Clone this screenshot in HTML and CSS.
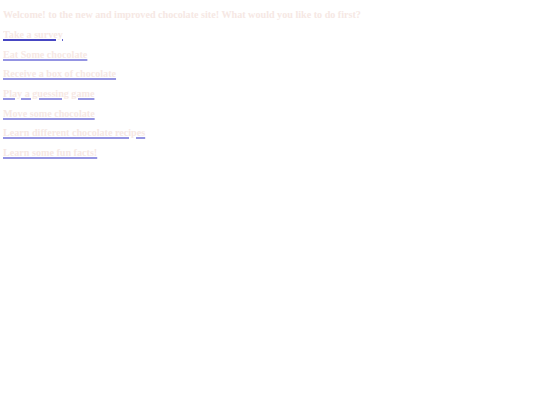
FILE: index.html
```html
<!DOCTYPE html>
<html>
<head>
<meta charset="utf-8">
<link rel="stylesheet" href="styles.css">
</head>
<body>
<h2 class="title">Welcome! to the new and improved chocolate site! What would you like to do first?</h2>
<h2 class="item"><a class="link link-first" href="#"><span class="txt">Take a survey</span></a></h2>
<h2 class="item"><a class="link" href="#"><span class="txt">Eat Some chocolate</span></a></h2>
<h2 class="item"><a class="link" href="#"><span class="txt">Receive a box of chocolate</span></a></h2>
<h2 class="item"><a class="link" href="#"><span class="txt">Play a guessing game</span></a></h2>
<h2 class="item"><a class="link" href="#"><span class="txt">Move some chocolate</span></a></h2>
<h2 class="item"><a class="link" href="#"><span class="txt">Learn different chocolate recipes</span></a></h2>
<h2 class="item"><a class="link" href="#"><span class="txt">Learn some fun facts!</span></a></h2>
</body>
</html>
```
FILE: styles.css
```css
html { background: #ffffff; }
body {
  margin: 0 3px 3px;
  font-family: "Liberation Serif", "Times New Roman", serif;
}
.title, .item {
  font-size: 10.15px;
  line-height: 11.5px;
  font-weight: bold;
  margin: 8.2px 0;
  color: #f6e8e4;
}
.title {
  margin-top: 9.2px;
}
.link {
  color: #9494e2;
  text-decoration: underline;
  text-decoration-thickness: 1.5px;
}
.link-first {
  color: #4646c2;
}
.txt {
  color: #f6e8e4;
}
```
